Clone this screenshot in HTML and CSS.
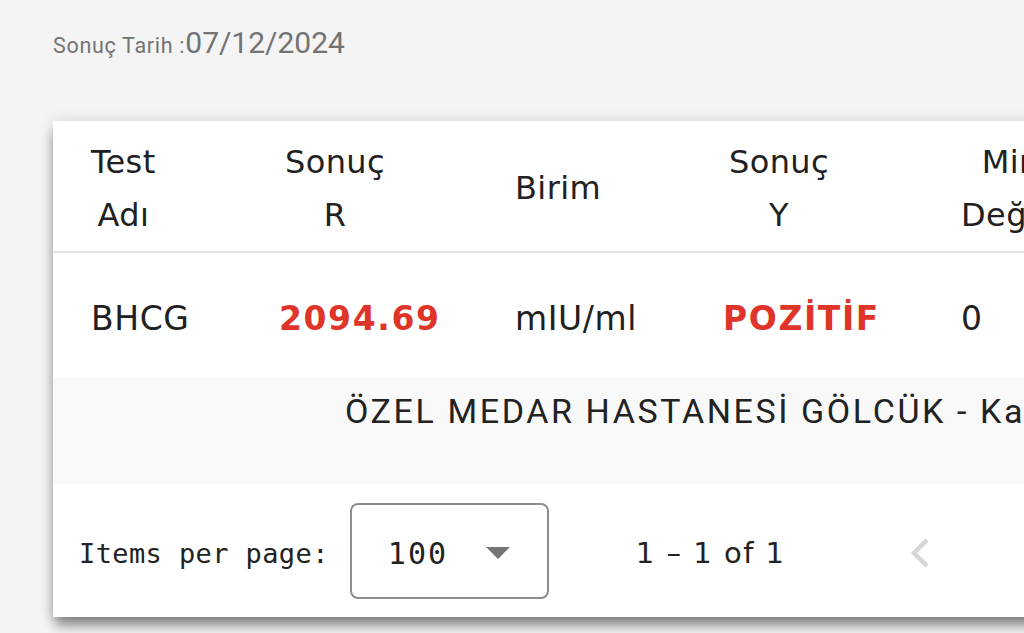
FILE: index.html
```html
<!DOCTYPE html>
<html lang="tr">
<head>
<meta charset="utf-8">
<title>Sonuç</title>
<link rel="stylesheet" href="styles.css">
</head>
<body>
<div class="page">
  <div class="date-line"><span class="lbl">Sonuç Tarih :</span><span class="date">07/12/2024</span></div>
  <div class="card">
    <div class="grid head">
      <div class="cell"><span class="th">Test<br>Adı</span></div>
      <div class="cell shift"><span class="th">Sonuç<br>R</span></div>
      <div class="cell"><span class="th">Birim</span></div>
      <div class="cell shift"><span class="th">Sonuç<br>Y</span></div>
      <div class="cell"><span class="th">Min<br>Değer</span></div>
    </div>
    <div class="grid body">
      <div class="cell">BHCG</div>
      <div class="cell danger">2094.69</div>
      <div class="cell">mIU/ml</div>
      <div class="cell danger">POZİTİF</div>
      <div class="cell">0</div>
    </div>
    <div class="lab-row">ÖZEL MEDAR HASTANESİ GÖLCÜK - Kadın Hastalıkları ve Doğum</div>
    <div class="paginator">
      <span class="ipp">Items per page:</span>
      <div class="select">
        <span class="val">100</span>
        <svg class="caret" width="24" height="12" viewBox="0 0 24 12"><path d="M0 0 L24 0 L12 12 Z" fill="#757575"/></svg>
      </div>
      <span class="range">1 – 1 of 1</span>
      <span class="nav-btn">
        <svg width="22" height="32" viewBox="0 0 22 32"><path d="M18 3 L5 16 L18 29" fill="none" stroke="#d6d6d6" stroke-width="4.5"/></svg>
      </span>
    </div>
  </div>
</div>
</body>
</html>
```

FILE: styles.css
```css
html, body {
  margin: 0;
  padding: 0;
  background: #f4f4f5;
  overflow: hidden;
}
.page {
  width: 1024px;
  height: 633px;
  overflow: hidden;
}
.date-line {
  padding: 28px 0 0 53px;
  height: 30px;
  line-height: 30px;
  font-family: Roboto, "Liberation Sans", sans-serif;
  color: #737373;
  white-space: nowrap;
}
.lbl {
  font-size: 21.5px;
  letter-spacing: 0.7px;
}
.date {
  font-size: 30px;
}
.card {
  margin: 63px 0 0 53px;
  width: 1250px;
  background: #fff;
  box-shadow: 0 10px 12px -2px rgba(0,0,0,0.45), 0 0 14px rgba(0,0,0,0.12);
  font-family: "DejaVu Sans", Verdana, sans-serif;
  color: #212121;
}
.grid {
  display: grid;
  grid-template-columns: 188px 236px 208px 238px 1fr;
  padding-left: 38px;
  align-items: center;
}
.head {
  height: 132px;
  box-sizing: border-box;
  padding-top: 5px;
  border-bottom: 2px solid #e3e3e3;
  font-size: 32px;
  letter-spacing: 0.4px;
}
.th {
  display: inline-block;
  text-align: center;
  line-height: 53px;
}
.shift .th {
  margin-left: 6px;
}
.body {
  height: 125px;
  box-sizing: border-box;
  padding-top: 7px;
  font-size: 33px;
  letter-spacing: 0.6px;
  line-height: 40px;
}
.danger {
  color: #df3429;
  font-weight: bold;
  font-size: 33px;
  letter-spacing: 1.6px;
}
.lab-row {
  height: 106px;
  box-sizing: border-box;
  padding: 15px 0 0 292px;
  background: #f9f9f9;
  font-family: Roboto, "Liberation Sans", sans-serif;
  font-size: 34px;
  letter-spacing: 2.6px;
  line-height: 36px;
  white-space: nowrap;
  color: #222;
}
.paginator {
  height: 133px;
  display: flex;
  align-items: center;
  padding-left: 26px;
  color: #222;
}
.ipp {
  font-family: "DejaVu Sans Mono", monospace;
  font-size: 27px;
  letter-spacing: 0.4px;
  margin-right: 21px;
  margin-top: 5px;
  white-space: nowrap;
}
.select {
  width: 199px;
  height: 96px;
  box-sizing: border-box;
  border: 2px solid #8d8d8d;
  border-radius: 8px;
  display: flex;
  align-items: center;
  padding: 0 37px 0 36px;
}
.val {
  font-family: "DejaVu Sans Mono", monospace;
  font-size: 30px;
  letter-spacing: 2px;
  margin-top: 5px;
}
.caret {
  margin-left: auto;
  margin-top: 4px;
}
.range {
  margin-left: 87px;
  margin-top: 5px;
  font-family: "DejaVu Sans", sans-serif;
  font-size: 29px;
  letter-spacing: 1.5px;
  white-space: nowrap;
}
.nav-btn {
  margin-left: 123px;
  display: flex;
  align-items: center;
  margin-top: 4px;
}
```
